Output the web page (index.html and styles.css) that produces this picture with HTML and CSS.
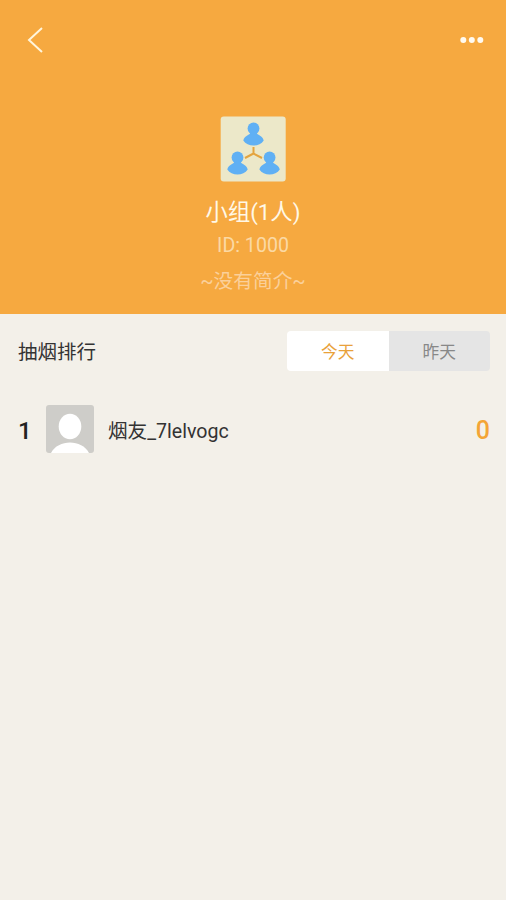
FILE: index.html
```html
<!DOCTYPE html>
<html lang="zh-CN">
<head>
    <meta charset="UTF-8">
    <meta name="viewport" content="width=device-width, initial-scale=1.0">
    <title>小组</title>
    <link rel="stylesheet" href="styles.css">
</head>
<body>
    <header class="group-header">
        <nav class="top-bar">
            <button type="button" class="icon-btn" aria-label="返回">
                <svg width="16" height="26" viewBox="0 0 16 26">
                    <path d="M15 1 L2 13 L15 25" fill="none" stroke="#fff5dc" stroke-width="2"/>
                </svg>
            </button>
            <button type="button" class="icon-btn" aria-label="更多">
                <svg width="24" height="6" viewBox="0 0 24 6" fill="#fffaf0">
                    <circle cx="3.3" cy="3" r="3"/>
                    <circle cx="11.8" cy="3" r="3"/>
                    <circle cx="20.3" cy="3" r="3"/>
                </svg>
            </button>
        </nav>
        <svg class="group-avatar" width="66" height="66" viewBox="0 0 66 66">
            <defs>
                <g id="member">
                    <circle cx="10" cy="6" r="5.9"/>
                    <path d="M6.5 9 H13.5 V11 C14 12.5 19 13 20.2 18 C16 24.8 4 24.8 -0.2 18 C1 13 6 12.5 6.5 11 Z"/>
                </g>
            </defs>
            <rect x="0.7" y="0.5" width="65" height="65" rx="3" fill="#ece8c9"/>
            <path d="M33.5 31 V38 M25 42 L33.5 37.5 L42 42" fill="none" stroke="#e4a43f" stroke-width="2"/>
            <g fill="#60b0f4">
                <use href="#member" x="23.5" y="6.5"/>
                <use href="#member" x="7.5" y="35.5"/>
                <use href="#member" x="39.6" y="35.5"/>
            </g>
        </svg>
        <h1 class="group-name">小组(1人)</h1>
        <p class="group-id">ID: 1000</p>
        <p class="group-intro">~没有简介~</p>
    </header>

    <main>
        <div class="rank-header">
            <h2 class="rank-title">抽烟排行</h2>
            <div class="tabs">
                <button type="button" class="tab active">今天</button>
                <button type="button" class="tab">昨天</button>
            </div>
        </div>
        <div class="rank-row">
            <span class="rank-number">1</span>
            <svg class="user-avatar" width="48" height="48" viewBox="0 0 48 48">
                <rect width="48" height="48" fill="#cecdc9"/>
                <ellipse cx="24" cy="21.5" rx="11.3" ry="12.8" fill="#fff"/>
                <path d="M5 48 C12 34 36 34 43 48 Z" fill="#fff"/>
            </svg>
            <span class="user-name">烟友_7lelvogc</span>
            <span class="smoke-count">0</span>
        </div>
    </main>
</body>
</html>
```
FILE: styles.css
```css
* {
    box-sizing: border-box;
}
body {
    margin: 0;
    min-height: 100vh;
    background-color: #f3f0e9;
    color: #333;
    font-family: Roboto, "Noto Sans CJK SC", sans-serif;
}
h1, h2, p {
    margin: 0;
    font-weight: normal;
}
button {
    padding: 0;
    border: none;
    background: none;
    font-family: inherit;
    cursor: pointer;
}
.group-header {
    display: flex;
    flex-direction: column;
    align-items: center;
    height: 314px;
    background-color: #f6a940;
}
.top-bar {
    display: flex;
    justify-content: space-between;
    align-items: center;
    width: 100%;
    height: 80px;
    padding: 0 22px 0 27px;
}
.icon-btn {
    display: flex;
}
.group-avatar {
    margin-top: 36px;
}
.group-name {
    margin-top: 14px;
    font-size: 22.3px;
    line-height: 32px;
    color: #fff8e6;
}
.group-id {
    margin-top: 4px;
    font-size: 19.6px;
    line-height: 28px;
    color: #fbd9a4;
}
.group-intro {
    margin-top: 8px;
    font-size: 19.7px;
    line-height: 28px;
    color: #fbd09a;
}
.rank-header {
    display: flex;
    justify-content: space-between;
    align-items: center;
    height: 57px;
    padding: 17px 16px 0 18px;
}
.rank-title {
    padding-top: 4px;
    font-size: 19.5px;
    line-height: 40px;
}
.tabs {
    display: flex;
    width: 203px;
    height: 40px;
    border-radius: 4px;
    overflow: hidden;
}
.tab {
    flex: 1;
    background-color: #e5e5e5;
    color: #888;
    font-size: 16.7px;
}
.tab.active {
    background-color: #fff;
    color: #e9a13a;
}
.rank-row {
    display: flex;
    align-items: center;
    margin-top: 34px;
    padding: 0 16px 0 18px;
}
.rank-number {
    width: 28px;
    padding-top: 3px;
    font-size: 24px;
    font-weight: 500;
    color: #222;
}
.user-avatar {
    border-radius: 3px;
}
.user-name {
    flex: 1;
    margin-left: 14px;
    font-size: 19.6px;
}
.smoke-count {
    padding-top: 3px;
    font-size: 25px;
    font-weight: 500;
    color: #f3a536;
}
```
